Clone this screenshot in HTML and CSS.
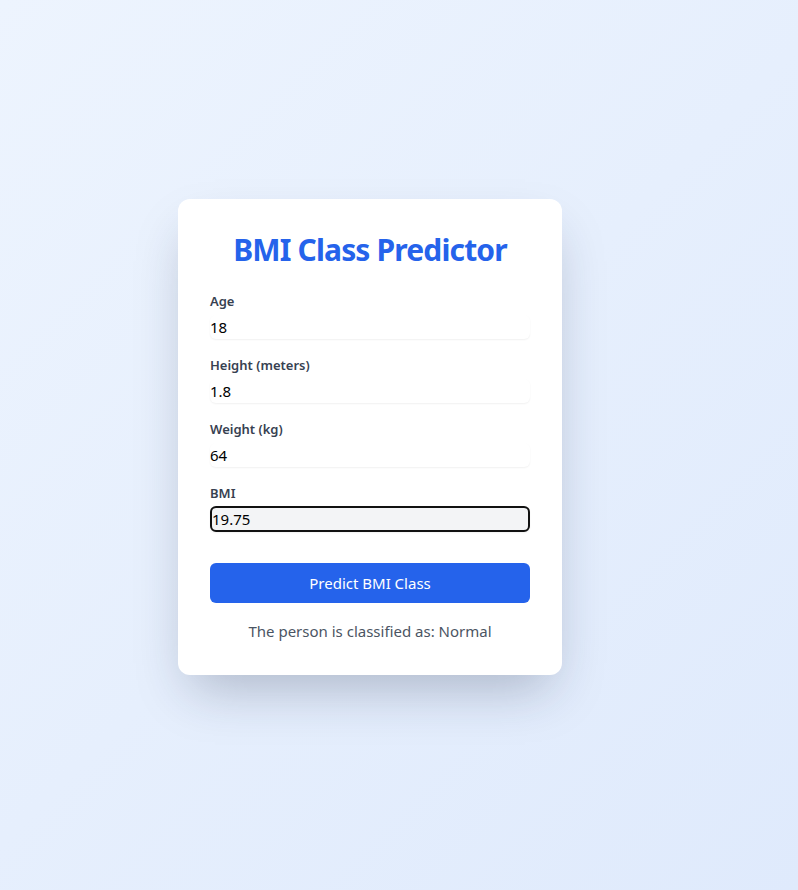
FILE: index.html
```html
<!DOCTYPE html>
<html lang="en">
<head>
<meta charset="utf-8">
<title>BMI Class Predictor</title>
<link rel="stylesheet" href="styles.css">
</head>
<body>
<main class="page">
  <div class="card">
    <h1 class="title">BMI Class Predictor</h1>
    <form class="form">
      <div class="field">
        <label class="label" for="age">Age</label>
        <input class="input" id="age" type="text" value="18">
      </div>
      <div class="field">
        <label class="label" for="height">Height (meters)</label>
        <input class="input" id="height" type="text" value="1.8">
      </div>
      <div class="field">
        <label class="label" for="weight">Weight (kg)</label>
        <input class="input" id="weight" type="text" value="64">
      </div>
      <div class="field">
        <label class="label" for="bmi">BMI</label>
        <input class="input input-readonly" id="bmi" type="text" value="19.75" readonly>
      </div>
      <button class="button" type="button">Predict BMI Class</button>
    </form>
    <p class="result">The person is classified as: Normal</p>
  </div>
</main>
</body>
</html>
```
FILE: styles.css
```css
* { box-sizing: border-box; }
html, body { margin: 0; padding: 0; }
body {
  font-family: "Noto Sans", "Open Sans", sans-serif;
  background: linear-gradient(135deg, #edf4fe 0%, #dfeafc 100%);
  min-height: 890px;
}
.page {
  padding: 199px 0 0 178px;
}
.card {
  width: 384px;
  background: #fff;
  border-radius: 12px;
  padding: 33px 32px 32px;
  box-shadow: 0 25px 50px -12px rgba(30, 41, 70, 0.28);
}
.title {
  margin: 0 0 23px;
  font-size: 30px;
  line-height: 36px;
  font-weight: 700;
  color: #2563eb;
  text-align: center;
  letter-spacing: -0.85px;
}
.form { display: flex; flex-direction: column; }
.field { display: flex; flex-direction: column; margin-bottom: 16px; }
.label {
  font-size: 13px;
  line-height: 20px;
  font-weight: 600;
  color: #374151;
  margin-bottom: 4px;
}
.input {
  font-family: inherit;
  font-size: 15px;
  line-height: 24px;
  height: 24px;
  padding: 0;
  border: none;
  border-radius: 6px;
  background: #fff;
  color: #000;
  box-shadow: 0 1px 2px rgba(0, 0, 0, 0.06);
  outline: none;
}
.input-readonly {
  background: #f3f4f6;
  border: 2px solid #111;
  padding-left: 0;
  height: 26px;
  line-height: 22px;
  margin-top: -1px;
  margin-bottom: -1px;
}
.button {
  margin-top: 16px;
  height: 40px;
  border: none;
  border-radius: 6px;
  background: #2563eb;
  color: #fff;
  font-family: inherit;
  font-size: 15px;
}
.result {
  margin: 16px 0 0;
  font-size: 15px;
  line-height: 24px;
  color: #4b5563;
  text-align: center;
}
```
